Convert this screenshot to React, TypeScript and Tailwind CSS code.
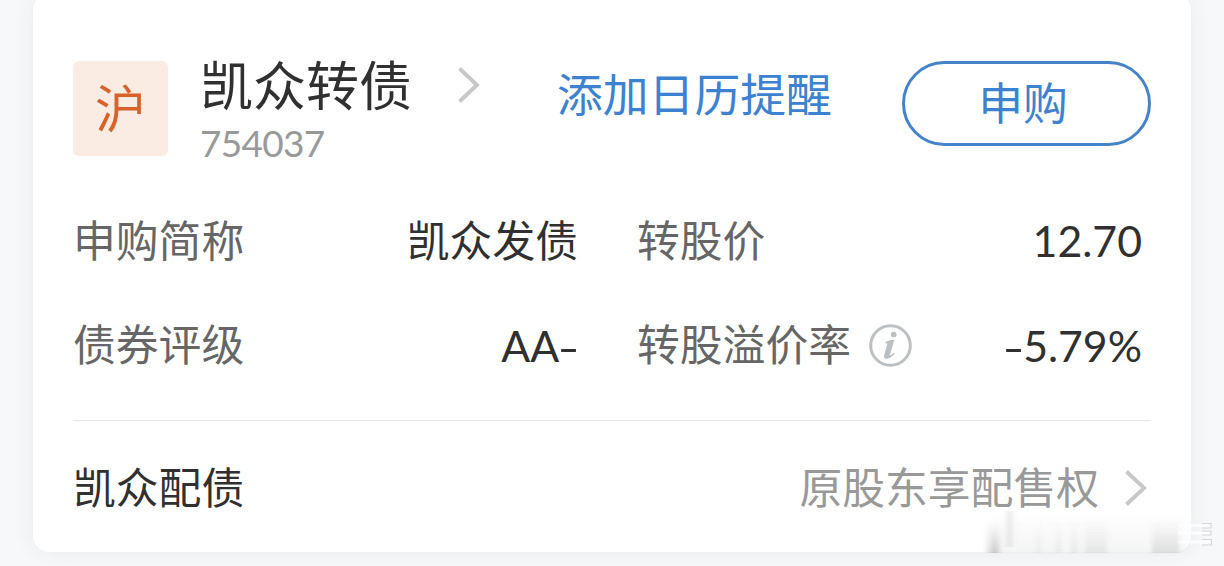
import React from "react";

interface Field {
  label: string;
  value: string;
  info?: boolean;
}

const leftFields: Field[] = [
  { label: "申购简称", value: "凯众发债" },
  { label: "债券评级", value: "AA-" },
];

const rightFields: Field[] = [
  { label: "转股价", value: "12.70" },
  { label: "转股溢价率", value: "-5.79%", info: true },
];

const Chevron: React.FC = () => (
  <svg width="22" height="36" viewBox="0 0 22 36" fill="none" className="shrink-0">
    <path d="M1.5 1.5 L19 18 L1.5 34.5" stroke="#c8c8c8" strokeWidth="3.9" />
  </svg>
);

const InfoIcon: React.FC = () => (
  <svg width="43" height="43" viewBox="0 0 43 43" fill="none" className="ml-[18px] shrink-0">
    <circle cx="21.5" cy="21.5" r="19.8" stroke="#bcc0c3" strokeWidth="3" />
    <circle cx="24.7" cy="10.6" r="2.9" fill="#bcc0c3" />
    <path
      d="M16.2 18.2 C19 16.6 21.8 16 25.4 15.7 L21 30.5 C20.6 32 21.5 31.8 25.2 28.8 L25.8 29.8 C22.5 33.2 20 34.8 17.4 34.8 C15.2 34.8 14.6 33.2 15.2 30.9 L18 21 C18.5 19.3 18 19 16.3 19.6 Z"
      fill="#bcc0c3"
    />
  </svg>
);

interface FieldValueProps {
  value: string;
}

// Hyphens are drawn wider than the font's own
const FieldValue: React.FC<FieldValueProps> = ({ value }) => (
  <span className="whitespace-nowrap text-[#303030]">
    {value.split(/(-)/).map((part, index) =>
      part === "-" ? (
        <span key={index} className="mx-[2px] inline-block scale-x-135 font-['Noto_Sans_CJK_SC',sans-serif] leading-none">
          -
        </span>
      ) : (
        part
      ),
    )}
  </span>
);

interface FieldColumnProps {
  fields: Field[];
}

const FieldColumn: React.FC<FieldColumnProps> = ({ fields }) => (
  <div className="flex flex-col">
    {fields.map((field) => (
      <div key={field.label} className="flex h-[104px] items-center justify-between">
        <div className="flex items-center">
          <span className="text-[#666666]">{field.label}</span>
          {field.info && <InfoIcon />}
        </div>
        <FieldValue value={field.value} />
      </div>
    ))}
  </div>
);

// Smeared watermark over the bottom right corner of the card
const Watermark: React.FC = () => (
  <svg
    width="254"
    height="50"
    viewBox="0 0 254 50"
    className="pointer-events-none absolute top-[508px] left-[970px]"
  >
    <defs>
      <linearGradient id="smear" x1="0" y1="0" x2="0" y2="1">
        <stop offset="0" stopColor="#999" stopOpacity="0" />
        <stop offset="1" stopColor="#888" stopOpacity="0.3" />
      </linearGradient>
      <linearGradient id="haze" x1="0" y1="0" x2="0" y2="1">
        <stop offset="0" stopColor="#eee" stopOpacity="0.1" />
        <stop offset="1" stopColor="#e4e5e6" stopOpacity="0.45" />
      </linearGradient>
      <filter id="soft" x="-20%" y="-20%" width="140%" height="140%">
        <feGaussianBlur stdDeviation="2.2 0.7" />
      </filter>
      <filter id="softer" x="-20%" y="-20%" width="140%" height="140%">
        <feGaussianBlur stdDeviation="5 1.2" />
      </filter>
    </defs>
    <rect x="20" y="8" width="196" height="37" fill="url(#haze)" filter="url(#softer)" />
    <g filter="url(#soft)">
      <rect x="16" y="12" width="15" height="33" fill="url(#smear)" opacity="0.6" />
      <rect x="22" y="18" width="5" height="27" fill="url(#smear)" />
      <rect x="36" y="3" width="7" height="36" fill="#aaa" opacity="0.2" />
      <rect x="66" y="12" width="5" height="33" fill="url(#smear)" opacity="0.3" />
      <rect x="86" y="12" width="5" height="33" fill="url(#smear)" opacity="0.4" />
      <rect x="101" y="12" width="6" height="33" fill="url(#smear)" opacity="0.4" />
      <rect x="115" y="12" width="22" height="33" fill="url(#smear)" opacity="0.45" />
      <rect x="182" y="12" width="27" height="33" fill="url(#smear)" opacity="0.7" />
    </g>
    <path
      d="M208 17.5 H239 M208 25 H239 M208 34 H240"
      stroke="#ffffff"
      strokeWidth="3"
      opacity="0.75"
    />
    <path
      d="M232 15.5 H241 V20 H232 M232 23 H241 V27 H232 M232 31.5 H241.5 V37 H232"
      stroke="#c9cbcd"
      strokeWidth="1.1"
      fill="none"
      opacity="0.75"
    />
  </svg>
);

const App: React.FC = () => {
  return (
    <main className="relative h-[566px] w-[1224px] overflow-hidden bg-[#f6f8fa] px-[33px] font-[Lato,'Noto_Sans_CJK_SC',sans-serif] text-[42.8px] leading-none">
      <section className="-mt-1.5 flex h-[558px] flex-col rounded-[16px] bg-white px-10 pt-[67px] shadow-[0_0_22px_rgba(50,50,60,0.07)]">
        <header className="flex h-[95px] items-start">
          <div className="flex size-[95px] shrink-0 items-center justify-center rounded-md bg-[#fbece3] text-[51px] text-[#d8622a]">
            沪
          </div>
          <div className="ml-[32px] w-[226px]">
            <h1 className="-mt-px text-[53px] leading-[52px] whitespace-nowrap text-[#303030]">凯众转债</h1>
            <p className="mt-[12px] text-[37px] leading-[38px] tracking-[-0.7px] text-[#999999]">754037</p>
          </div>
          <div className="ml-[32px] pt-[6px]">
            <Chevron />
          </div>
          <a className="ml-[77px] pt-[11px] text-[45.8px] whitespace-nowrap text-[#3c82d0]">添加日历提醒</a>
          <button className="ml-auto flex h-[85px] w-[249px] items-center justify-center rounded-full border-[3px] border-[#4583c8] pr-[7px] pb-px text-[44.8px] text-[#3c82d0]">
            申购
          </button>
        </header>

        <div className="mt-[33px] grid grid-cols-[505px_505px] gap-x-[59px]">
          <FieldColumn fields={leftFields} />
          <FieldColumn fields={rightFields} />
        </div>

        <footer className="mt-[23px] flex h-[134px] items-center justify-between border-t border-[#e6e6e6] pt-[3px]">
          <span className="text-[#303030]">凯众配债</span>
          <div className="flex items-center gap-[26px] pr-1">
            <span className="text-[#999999]">原股东享配售权</span>
            <Chevron />
          </div>
        </footer>
      </section>
      <Watermark />
    </main>
  );
};

export default App;
